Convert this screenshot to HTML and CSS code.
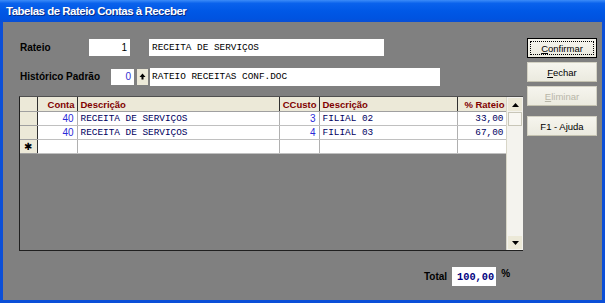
FILE: index.html
```html
<!DOCTYPE html>
<html>
<head>
<meta charset="utf-8">
<link rel="stylesheet" href="styles.css">
</head>
<body>
<div class="window">
  <div class="titlebar">Tabelas de Rateio Contas à Receber</div>
  <div class="body">
    <div class="main">
      <div class="row row1">
        <span class="label l-rateio">Rateio</span>
        <span class="field f-num1">1</span>
        <span class="field f-desc1 mono">RECEITA DE SERVIÇOS</span>
      </div>
      <div class="row row2">
        <span class="label l-hist">Histórico Padrão</span>
        <span class="field f-num2">0</span>
        <span class="pick"><svg width="7" height="7" viewBox="0 0 7 7"><path d="M3.5 0.5 L6.5 4 L4.5 4 L4.5 6.5 L2.5 6.5 L2.5 4 L0.5 4 Z" fill="#000"/></svg></span>
        <span class="field f-desc2 mono">RATEIO RECEITAS CONF.DOC</span>
      </div>
      <div class="grid">
        <div class="gridarea">
          <table class="tbl">
            <colgroup>
              <col class="c-ind"><col class="c-conta"><col class="c-desc"><col class="c-cc"><col class="c-desc2"><col class="c-rat">
            </colgroup>
            <thead>
              <tr><th></th><th class="r">Conta</th><th>Descrição</th><th class="r">CCusto</th><th>Descrição</th><th class="r">% Rateio</th></tr>
            </thead>
            <tbody>
              <tr><td class="ind"></td><td class="num">40</td><td class="mono">RECEITA DE SERVIÇOS</td><td class="num">3</td><td class="mono">FILIAL 02</td><td class="mono r">33,00</td></tr>
              <tr><td class="ind"></td><td class="num">40</td><td class="mono">RECEITA DE SERVIÇOS</td><td class="num">4</td><td class="mono">FILIAL 03</td><td class="mono r">67,00</td></tr>
              <tr><td class="ind star">✱</td><td></td><td></td><td></td><td></td><td></td></tr>
            </tbody>
          </table>
        </div>
        <div class="scroll">
          <div class="sbtn"><svg width="7" height="4" viewBox="0 0 7 4"><path d="M0 4 L3.5 0 L7 4 Z" fill="#000"/></svg></div>
          <div class="thumb"></div>
          <div class="track"></div>
          <div class="sbtn"><svg width="7" height="4" viewBox="0 0 7 4"><path d="M0 0 L3.5 4 L7 0 Z" fill="#000"/></svg></div>
        </div>
      </div>
      <div class="totalrow">
        <span class="label">Total</span>
        <span class="field f-total mono">100,00</span>
        <span class="label pct">%</span>
      </div>
    </div>
    <div class="buttons">
      <div class="btn default"><span class="focus"><u>C</u>onfirmar</span></div>
      <div class="btn"><u>F</u>echar</div>
      <div class="btn disabled"><u>E</u>liminar</div>
      <div class="btn help">F1 - Ajuda</div>
    </div>
  </div>
</div>
</body>
</html>
```
FILE: styles.css
```css
html, body {
  margin: 0;
  padding: 0;
  width: 605px;
  height: 303px;
  overflow: hidden;
  background: #808080;
}
.window {
  width: 605px;
  height: 303px;
  box-sizing: border-box;
  display: flex;
  flex-direction: column;
  background: #0b4fd8;
  padding: 0 3px 3px 3px;
}
.titlebar {
  height: 22px;
  margin: 0 -3px;
  padding-left: 6px;
  background: linear-gradient(to bottom, #3c8cf8 0%, #0a62ec 15%, #0058e6 50%, #0053e0 85%, #0a4fd4 100%);
  color: #fff;
  font-family: "Liberation Sans", sans-serif;
  font-weight: bold;
  font-size: 11.5px;
  line-height: 22px;
  letter-spacing: -0.5px;
  text-shadow: 1px 1px 0 #0a2a80;
}
.body {
  flex: 1;
  display: flex;
  background: #808080;
  font-family: "Liberation Sans", sans-serif;
  font-size: 11px;
  color: #000;
}
.main {
  width: 520px;
  padding: 17px 0 0 16px;
  box-sizing: border-box;
}
.row {
  display: flex;
  align-items: center;
  height: 17px;
}
.row2 {
  margin-top: 12px;
}
.label {
  font-weight: bold;
  font-size: 10px;
  color: #000;
}
.l-rateio { width: 69px; padding-left: 1px; }
.l-hist { width: 91px; padding-left: 1px; }
.field {
  background: #fff;
  height: 17px;
  box-sizing: border-box;
  display: flex;
  align-items: center;
  padding: 0 3px;
  white-space: nowrap;
  font-size: 10px;
}
.mono {
  font-family: "Liberation Mono", monospace;
  font-size: 9.4px;
  color: #000060;
}
.f-num1 { width: 41px; justify-content: flex-end; }
.f-desc1 { width: 235px; margin-left: 19px; color: #000; }
.f-num2 { width: 23px; justify-content: flex-end; color: #3030d0; height: 16px; }
.pick {
  width: 11px;
  height: 16px;
  margin-left: 3px;
  background: #ece9d8;
  display: flex;
  align-items: center;
  justify-content: center;
}
.f-desc2 { width: 290px; margin-left: 2px; color: #000; padding-left: 2px; height: 18px; }
.grid {
  margin-top: 11px;
  width: 504px;
  height: 155px;
  display: flex;
  box-sizing: border-box;
  border-left: 1px solid #202020;
  border-bottom: 1px solid #202020;
  border-top: 1px solid #505050;
}
.gridarea {
  flex: 1;
  overflow: hidden;
}
.tbl {
  border-collapse: collapse;
  table-layout: fixed;
  width: 470px;
}
.c-ind { width: 17px; }
.c-conta { width: 40px; }
.c-desc { width: 202px; }
.c-cc { width: 40px; }
.c-desc2 { width: 138px; }
.c-rat { width: 50px; }
.tbl th {
  height: 14px;
  padding: 0 2px 0 3px;
  background: #ece9d8;
  color: #800000;
  font-weight: bold;
  font-size: 9.5px;
  text-align: left;
  border-right: 1px solid #303030;
  border-bottom: 1px solid #a0a0a0;
  white-space: nowrap;
  overflow: hidden;
}
.tbl th.r, .tbl td.r { text-align: right; }
.tbl td {
  height: 13px;
  padding: 0 3px;
  background: #fff;
  border-right: 1px solid #b0b0b0;
  border-bottom: 1px solid #c0c0c0;
  white-space: nowrap;
  overflow: hidden;
  line-height: 13px;
}
.tbl td.ind {
  background: #ece9d8;
  border-right: 1px solid #303030;
  border-bottom: 1px solid #a0a0a0;
  text-align: center;
  padding: 0;
  font-size: 10px;
}
.tbl td.num {
  text-align: right;
  color: #2a2ad8;
  font-size: 10px;
}
.scroll {
  width: 16px;
  display: flex;
  flex-direction: column;
  background: #f4f3ee;
  border-left: 1px solid #d8d6c8;
}
.sbtn {
  height: 13px;
  margin: 1px 1px;
  background: #ece9d8;
  display: flex;
  align-items: center;
  justify-content: center;
}
.thumb {
  height: 12px;
  margin: 0 1px;
  border: 1px solid #c8c6b8;
  background: #f8f7f2;
}
.track { flex: 1; }
.totalrow {
  display: flex;
  align-items: center;
  margin-top: 16px;
  padding-left: 405px;
  height: 19px;
}
.f-total {
  width: 44px;
  height: 19px;
  margin-left: 5px;
  justify-content: flex-end;
  font-weight: bold;
  font-size: 10.3px;
  color: #000080;
  padding-right: 2px;
}
.pct { margin-left: 5px; align-self: flex-start; margin-top: 1px; }
.buttons {
  display: flex;
  flex-direction: column;
  padding: 16px 0 0 4px;
  gap: 4px;
}
.btn {
  width: 70px;
  height: 20px;
  box-sizing: border-box;
  background: linear-gradient(to bottom, #f6f5ee, #ebeadf);
  border: 1px solid #d4d2c4;
  border-bottom-color: #c4c2b0;
  display: flex;
  align-items: center;
  justify-content: center;
  font-size: 9.5px;
  color: #000;
}
.btn.default {
  border: 1px solid #000;
  padding: 2px;
}
.btn.default .focus {
  width: 100%;
  height: 100%;
  border: 1px dotted #000;
  box-sizing: border-box;
  display: flex;
  align-items: center;
  justify-content: center;
}
.btn.disabled { color: #b8b6a8; }
.btn.help { margin-top: 6px; }
```
